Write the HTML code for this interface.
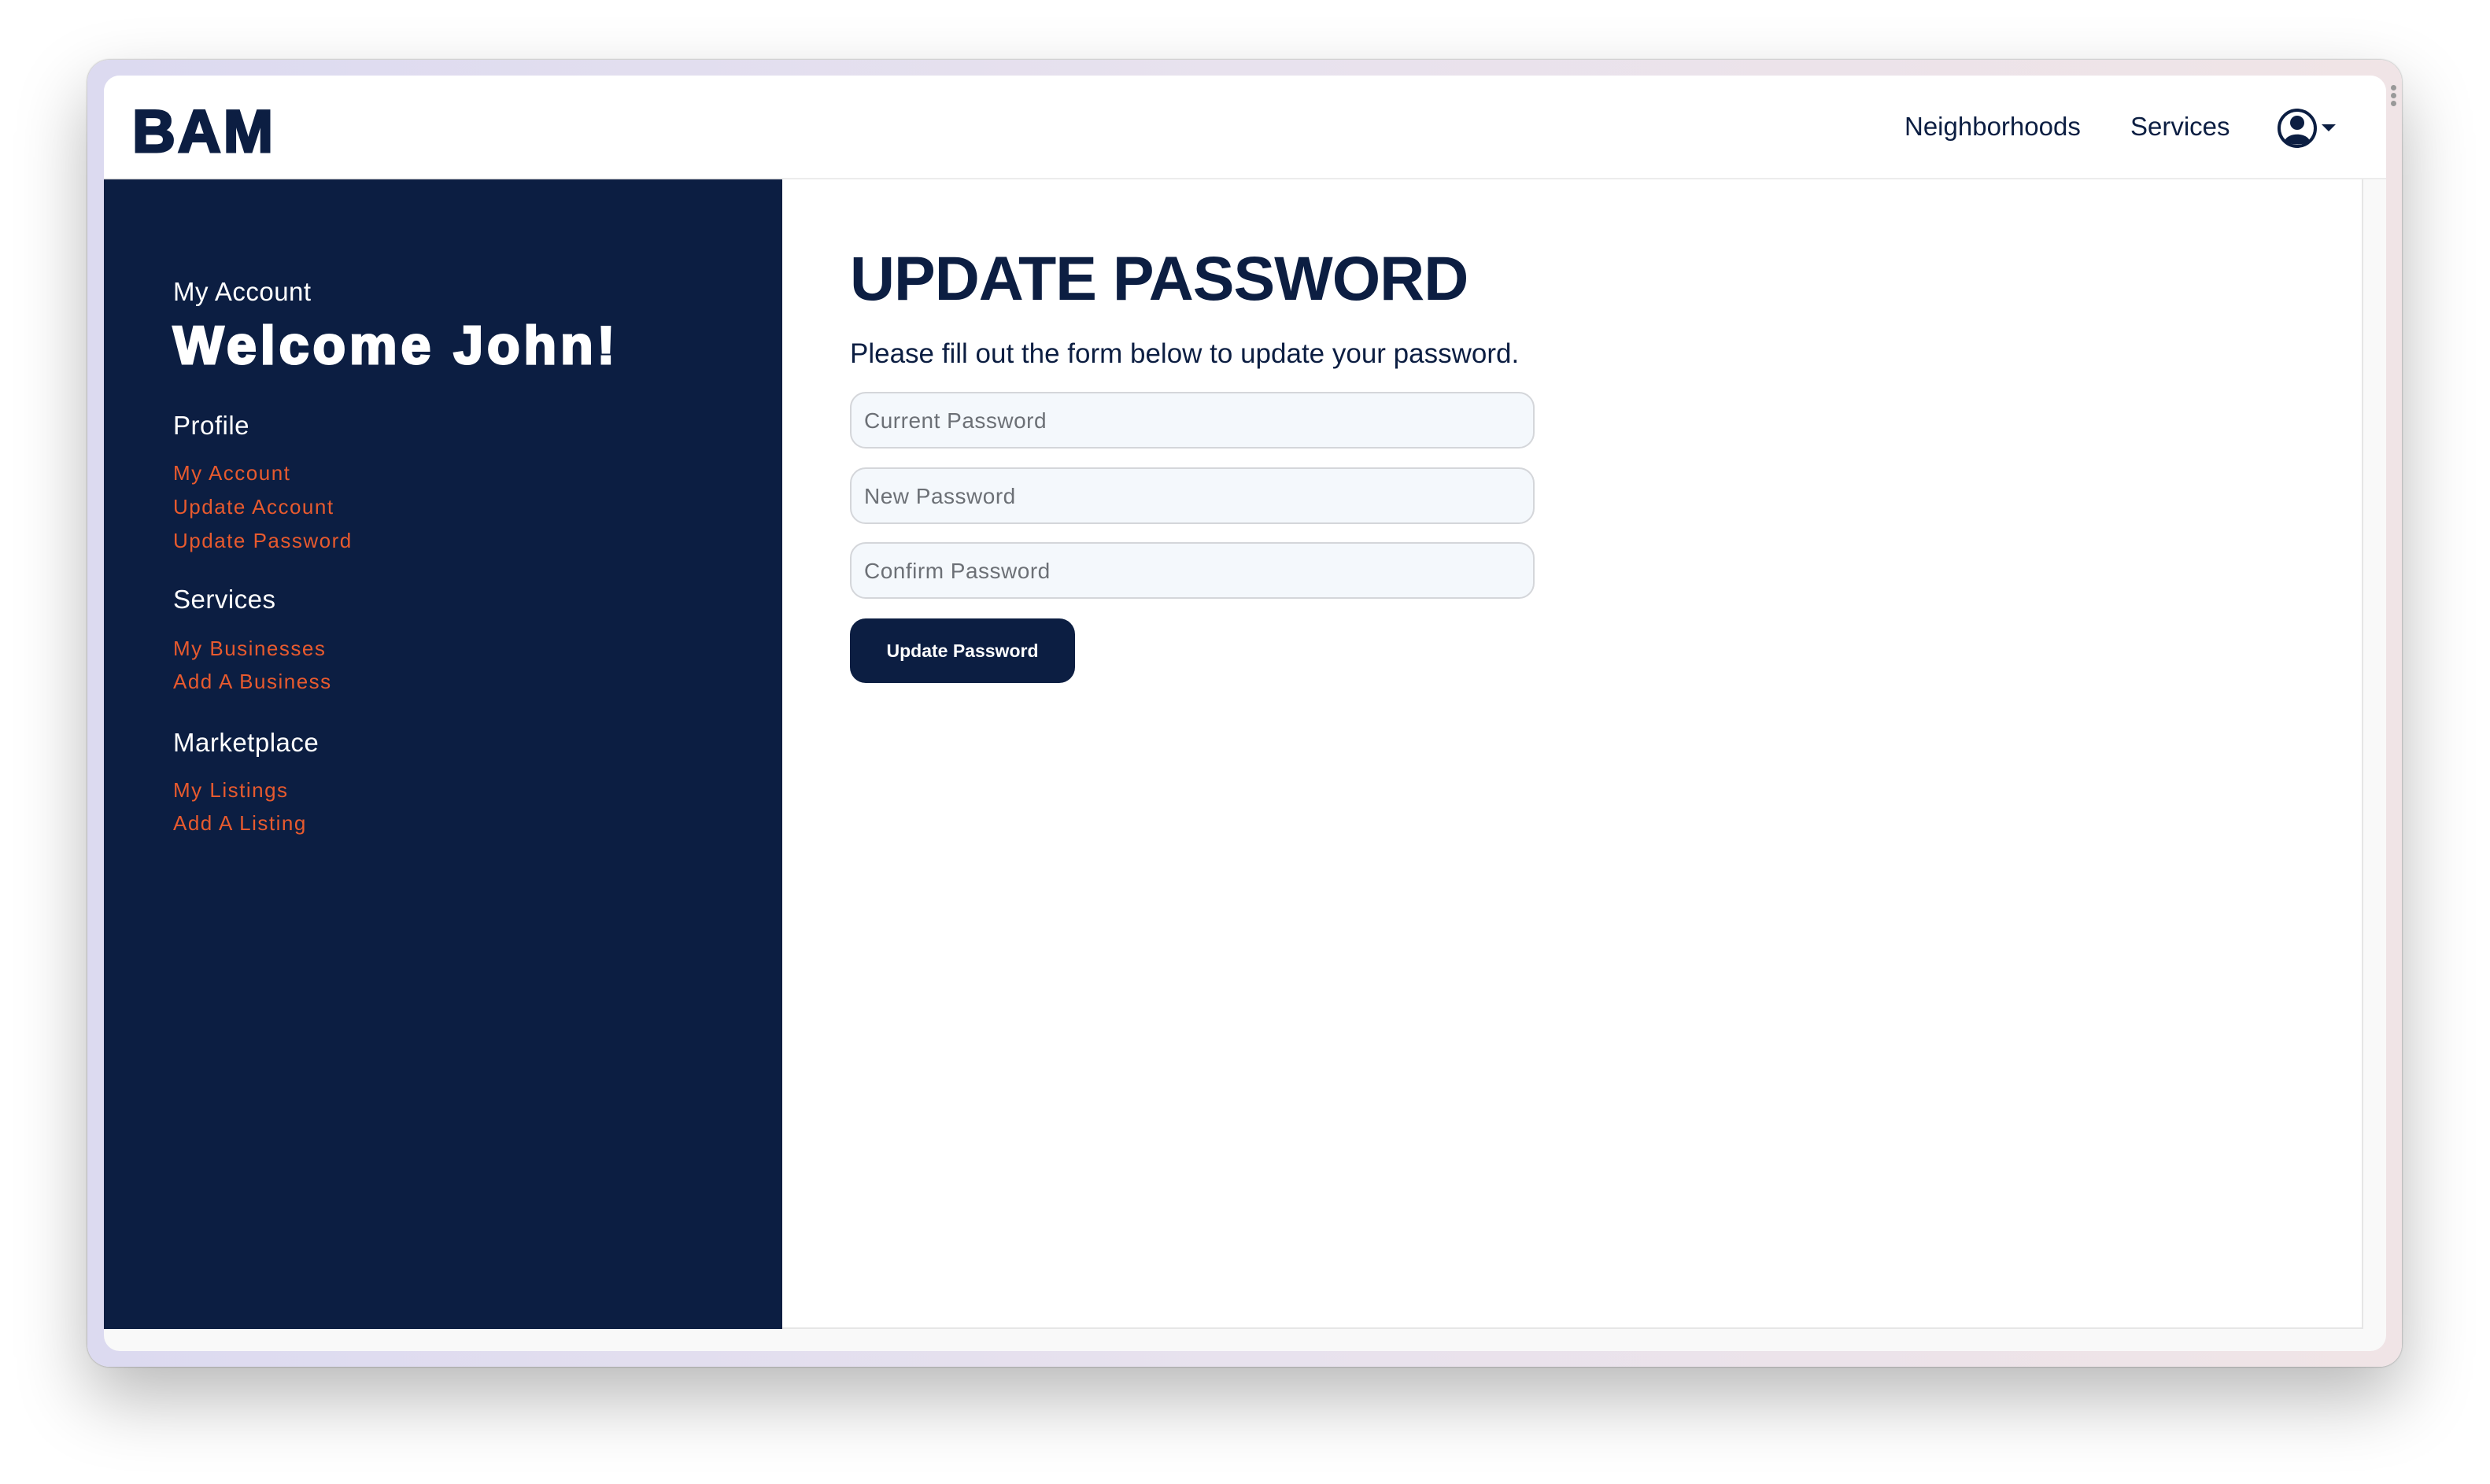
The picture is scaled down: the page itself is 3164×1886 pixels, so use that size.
<!DOCTYPE html>
<html><head><meta charset="utf-8"><style>
*{margin:0;padding:0;box-sizing:border-box}
body{width:3164px;height:1886px;background:#fff;position:relative;overflow:hidden;font-family:"Liberation Sans",sans-serif}
.frame{position:absolute;left:111px;top:76px;width:2941px;height:1661px;border-radius:28px;background:linear-gradient(90deg,#dcdaf0,#e8e2ee 50%,#f0e4e6);box-shadow:0 40px 90px rgba(0,0,0,.28),0 0 2px rgba(0,0,0,.4)}
.inner{position:absolute;left:132px;top:96px;width:2900px;height:1621px;border-radius:20px;background:#f9f9f9;overflow:hidden}
.hdr{position:absolute;left:0;top:0;width:2900px;height:132px;background:#fff;border-bottom:2px solid #ececec}
.side{position:absolute;left:0;top:132px;width:862px;height:1461px;background:#0c1e42}
.main{position:absolute;left:862px;top:132px;width:2009px;height:1461px;background:#fff;border-right:2px solid #e6e6e6;border-bottom:2px solid #e6e6e6}
.abs{position:absolute;white-space:nowrap}
.bam{left:36px;top:28px;font-size:76px;font-weight:900;color:#0c1e42;letter-spacing:3px;-webkit-text-stroke:3px #0c1e42}
.nav{font-size:33px;color:#0c1e42;top:46px}
.s{color:#fff;left:88px}
.l{color:#e85a2e;font-size:26px;letter-spacing:1.5px;left:88px}
.h{font-size:33px;letter-spacing:.5px}
.inp{position:absolute;left:220px;width:870px;height:72px;border:2px solid #d4d6da;border-radius:20px;background:#f4f8fc;font-size:28px;color:#6c7076;padding:19px 0 0 16px;letter-spacing:.5px}
</style></head><body>
<div class="frame"></div>
<div class="abs" style="left:3038px;top:108px;width:8px;">
<div style="width:7px;height:7px;border-radius:50%;background:#999;margin-bottom:3px"></div>
<div style="width:7px;height:7px;border-radius:50%;background:#999;margin-bottom:3px"></div>
<div style="width:7px;height:7px;border-radius:50%;background:#999"></div></div>
<div class="inner">
 <div class="hdr">
  <div class="abs bam">BAM</div>
  <div class="abs nav" style="left:2288px">Neighborhoods</div>
  <div class="abs nav" style="left:2575px">Services</div>
  <svg class="abs" style="left:2761px;top:41px" width="52" height="52" viewBox="0 0 52 52"><circle cx="26" cy="26" r="23" fill="#fff" stroke="#0c1e42" stroke-width="4"/><circle cx="26" cy="19" r="9" fill="#0c1e42"/><path d="M10 42 C14 31 38 31 42 42 C36 48 16 48 10 42Z" fill="#0c1e42"/></svg>
  <svg class="abs" style="left:2818px;top:62px" width="20" height="12"><path d="M0 0 L18 0 L9 9Z" fill="#0c1e42"/></svg>
 </div>
 <div class="side">
  <div class="abs s" style="top:124px;font-size:33px;letter-spacing:.5px">My Account</div>
  <div class="abs s" style="top:172px;font-size:68px;font-weight:900;letter-spacing:5px;-webkit-text-stroke:3px #fff">Welcome John!</div>
  <div class="abs s h" style="top:294px">Profile</div>
  <div class="abs l" style="top:358px">My Account</div>
  <div class="abs l" style="top:401px">Update Account</div>
  <div class="abs l" style="top:444px">Update Password</div>
  <div class="abs s h" style="top:515px">Services</div>
  <div class="abs l" style="top:581px">My Businesses</div>
  <div class="abs l" style="top:623px">Add A Business</div>
  <div class="abs s h" style="top:697px">Marketplace</div>
  <div class="abs l" style="top:761px">My Listings</div>
  <div class="abs l" style="top:803px">Add A Listing</div>
 </div>
 <div class="main">
  <div class="abs" style="left:86px;top:80px;font-size:79px;font-weight:700;color:#0c1e42;letter-spacing:-1px">UPDATE PASSWORD</div>
  <div class="abs" style="left:86px;top:202px;font-size:35px;color:#0c1e42">Please fill out the form below to update your password.</div>
  <div class="inp" style="left:86px;top:270px">Current Password</div>
  <div class="inp" style="left:86px;top:366px">New Password</div>
  <div class="inp" style="left:86px;top:461px">Confirm Password</div>
  <div class="abs" style="left:86px;top:558px;width:286px;height:82px;border-radius:20px;background:#0c1e42;color:#fff;font-size:23px;font-weight:700;text-align:center;line-height:82px">Update Password</div>
 </div>
</div>
</body></html>
